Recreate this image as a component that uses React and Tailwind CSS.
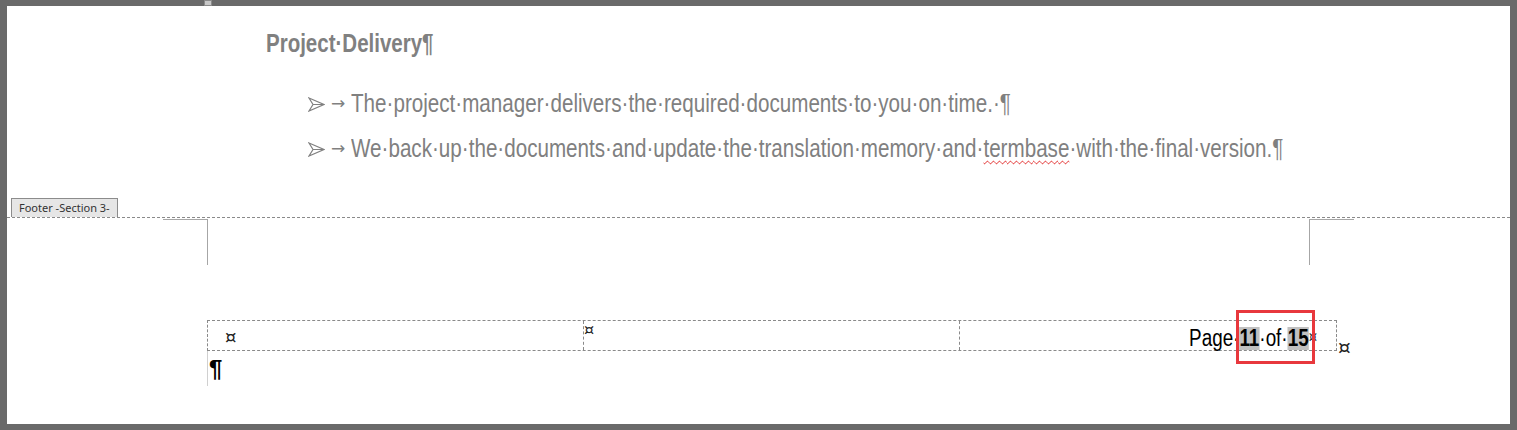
import React from "react";

const sans = { fontFamily: '"Liberation Sans", Arial, sans-serif' };
const dejavu = { fontFamily: '"DejaVu Sans", sans-serif' };

// Wingdings-style 3D arrowhead bullet
const ArrowHead = () => (
  <svg width="17" height="15" viewBox="0 0 17 15" className="shrink-0">
    <path d="M1 1 L16 7.5 L1 14 L5 7.5 Z" fill="none" stroke="#808080" strokeWidth="1.2" strokeLinejoin="miter" />
    <path d="M5 7.5 L16 7.5" stroke="#808080" strokeWidth="1" />
  </svg>
);

const Bullet = ({ children }) => (
  <div className="flex items-center h-[45px] leading-[45px] text-[#808080]">
    <span className="w-[23px] flex items-center pt-[1px]"><ArrowHead /></span>
    <span className="w-[20px] text-[17px]" style={dejavu}>→</span>
    <span className="inline-block whitespace-nowrap origin-left scale-x-[0.825] text-[25px]" style={sans}>
      {children}
    </span>
  </div>
);

export default function App() {
  return (
    <div className="relative w-[1517px] h-[430px] bg-[#6a6a6a] pt-[6px] pl-[7px] pr-[7px] pb-[6px]">
      {/* ruler tab marker */}
      <div className="absolute left-[204px] top-0 w-[8px] h-[6px] bg-[#c8c8c8] border border-[#8a8a8a]" />

      <div className="flex flex-col h-full bg-white">
        {/* body text */}
        <div className="pl-[259px] pt-[22px]">
          <h2
            className="inline-block whitespace-nowrap origin-left scale-x-[0.82] text-[25px] leading-[30px] font-bold text-[#808080]"
            style={sans}
          >
            Project·Delivery¶
          </h2>
        </div>
        <div className="pl-[301px] pt-[23px]">
          <Bullet>The·project·manager·delivers·the·required·documents·to·you·on·time.·¶</Bullet>
          <Bullet>
            We·back·up·the·documents·and·update·the·translation·memory·and·
            <span className="underline decoration-wavy decoration-[#e02020] decoration-1 underline-offset-[3px]">termbase</span>
            ·with·the·final·version.¶
          </Bullet>
        </div>

        {/* footer label + dashed separator */}
        <div className="mt-[27px] pl-[4px]">
          <div
            className="w-[107px] h-[19px] bg-[#e6e6e6] border border-b-0 border-[#8c8c8c] text-[11px] leading-[18px] text-[#333] pl-[7px]"
            style={{ fontFamily: '"Noto Sans", "Open Sans", sans-serif' }}
          >
            Footer -Section 3-
          </div>
        </div>
        <div className="border-t border-dashed border-[#8a8a8a]" />

        {/* margin corner marks */}
        <div className="flex h-[46px]">
          <div className="ml-[156px] w-[45px] h-[46px] border-t border-r border-[#a6a6a6] mt-[1px]" />
          <div className="ml-[1101px] w-[45px] h-[46px] border-t border-l border-[#a6a6a6] mt-[1px]" />
        </div>

        {/* footer table */}
        <div className="pl-[200px] pt-[56px]">
          <div className="flex items-end">
            <div className="flex w-[1130px] h-[31px] border border-dashed border-[#8a8a8a]">
              <div className="w-[376px] border-r border-dashed border-[#8a8a8a] pl-[17px] pt-[6px] text-[18px] leading-[20px] text-[#222]" style={dejavu}>¤</div>
              <div className="w-[376px] border-r border-dashed border-[#8a8a8a] pl-0 pt-0 text-[16px] leading-[18px] text-[#222]" style={dejavu}>¤</div>
              <div className="flex-1 flex justify-end items-end pr-[19px] text-black">
                <div className="flex items-end whitespace-nowrap origin-right scale-x-[0.82] text-[23px] leading-[23px]" style={sans}>
                  <span>Page·</span>
                  <span className="font-bold bg-[#c0c0c0]">11</span>
                  <span>·of·</span>
                  <span className="font-bold bg-[#c0c0c0]">15</span>
                  <span className="text-[16px] leading-[20px] pb-[3px] text-[#333]" style={dejavu}>¤</span>
                </div>
              </div>
            </div>
            <div className="w-[18px] text-[20px] leading-[14px] text-[#222] pl-[1px] mb-[-3px]" style={dejavu}>¤</div>
          </div>
          <div className="flex">
            <div className="border-l border-[#d0d0d0] h-[35px] pl-[1px] pt-[3px] text-[24px] leading-[30px] font-bold text-black" style={sans}>¶</div>
          </div>
        </div>
      </div>

      {/* highlight box over page number */}
      <div className="absolute left-[1236px] top-[310px] w-[79px] h-[54px] border-[3px] border-[#e8383d]" />
    </div>
  );
}
